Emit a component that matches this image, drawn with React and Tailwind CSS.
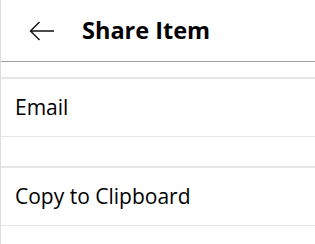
export default function App() {
  return (
    <div
      className="w-[315px] h-[244px] bg-white border-l border-[#dcdcdc] overflow-hidden text-black"
      style={{ fontFamily: '"Open Sans", "Noto Sans", sans-serif' }}
    >
      <div className="h-[61px] flex items-center border-b border-[#a0a0a0] box-content">
        <button className="ml-[28px] w-[26px] h-[22px] flex items-center justify-center">
          <svg width="26" height="20" viewBox="0 0 26 20" fill="none" stroke="#111" strokeWidth="1.4">
            <path d="M25 10H1.5M10.5 1L1.5 10l9 9" />
          </svg>
        </button>
        <h1 className="ml-[27px] text-[23.5px] font-bold leading-none">Share Item</h1>
      </div>
      <div className="h-[15px]" />
      <ul className="border-t-2 border-[#e6e6e6]">
        <li className="h-[58px] flex items-center pl-[14px] text-[21px] border-b border-[#e6e6e6]">Email</li>
        <li className="h-[31px] border-b-2 border-[#e6e6e6]" />
        <li className="h-[58px] flex items-center pl-[14px] text-[21px] border-b border-[#e6e6e6]">Copy to Clipboard</li>
      </ul>
    </div>
  );
}
